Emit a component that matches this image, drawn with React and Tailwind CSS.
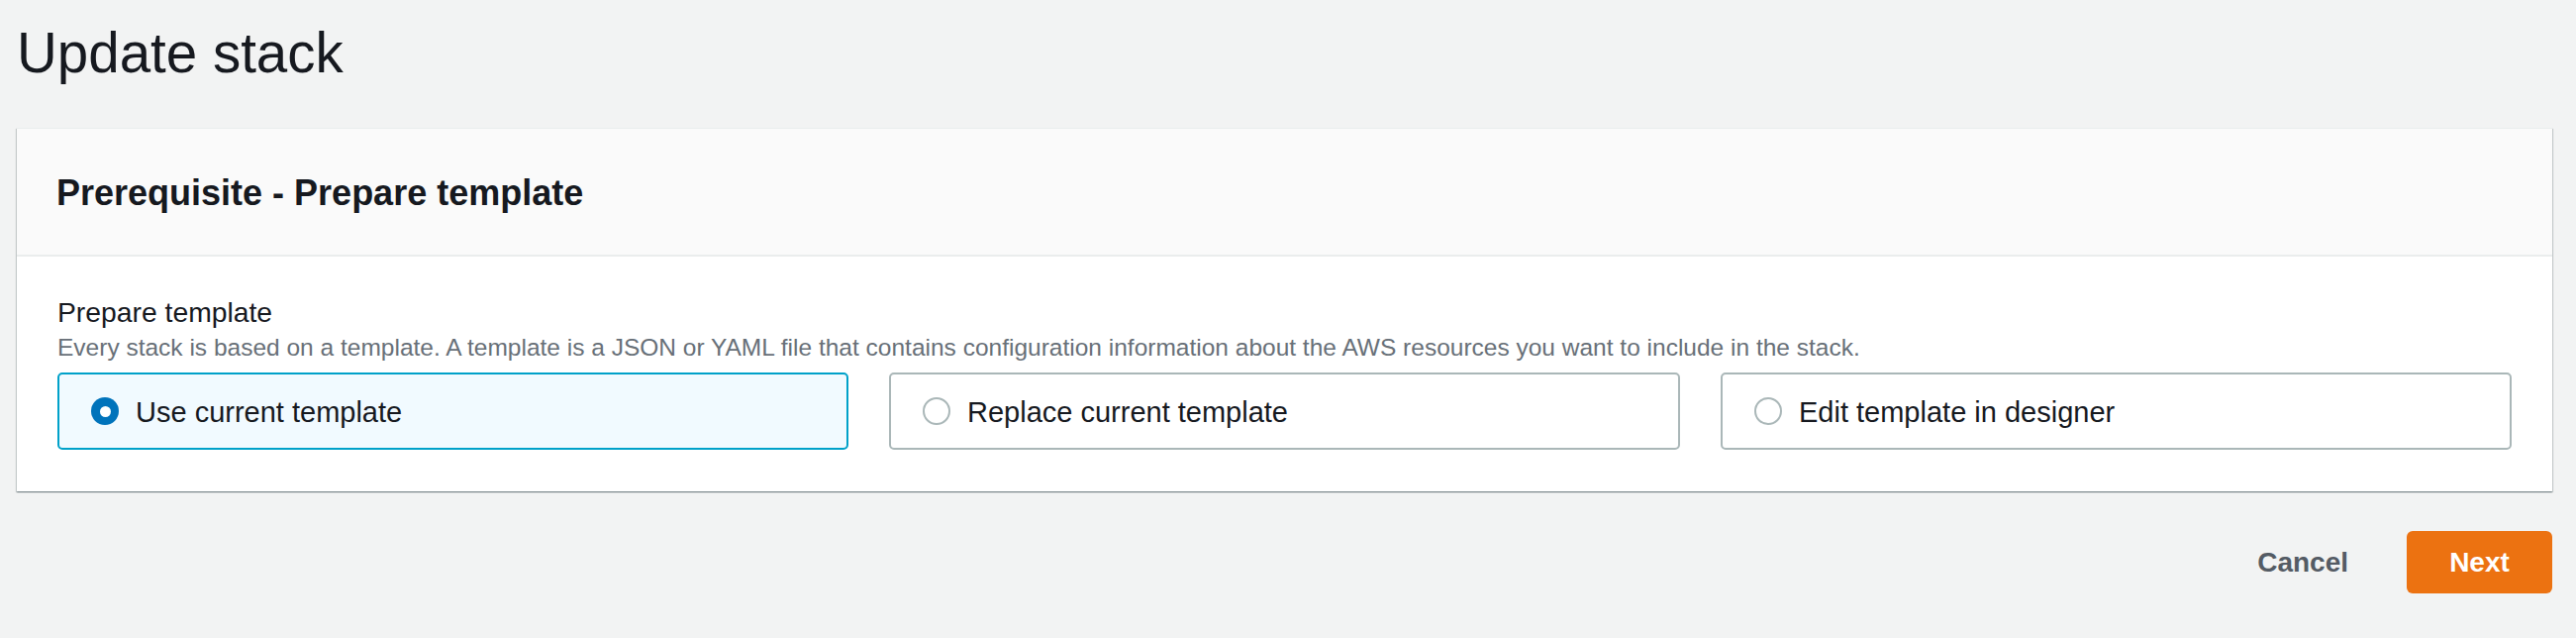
import React, { useState } from 'react';

const options = [
  { id: 'current', label: 'Use current template' },
  { id: 'replace', label: 'Replace current template' },
  { id: 'designer', label: 'Edit template in designer' },
];

// Radio tile used for the template choice
const RadioTile = ({ label, checked, onSelect }) => (
  <button
    type="button"
    onClick={onSelect}
    className={
      checked
        ? 'flex h-[78px] items-center rounded-[5px] border-2 border-[#00a1c9] bg-[#f1faff] pl-[32px] text-left'
        : 'flex h-[78px] items-center rounded-[5px] border-2 border-[#aab7b8] bg-white pl-[32px] text-left'
    }
  >
    {checked ? (
      <span className="flex h-[28px] w-[28px] items-center justify-center rounded-full bg-[#0073bb]">
        <span className="h-[11px] w-[11px] rounded-full bg-white" />
      </span>
    ) : (
      <span className="h-[28px] w-[28px] rounded-full border-2 border-[#aab7b8] bg-white" />
    )}
    <span className="ml-[17px] pt-[2px] text-[29px] leading-[36px] text-[#16191f]">{label}</span>
  </button>
);

const App = () => {
  const [selected, setSelected] = useState('current');

  return (
    <div
      className="min-h-[644px] bg-[#f2f3f3] pl-[17px] pr-[24px] pt-[22px]"
      style={{ fontFamily: '"Liberation Sans", Arial, sans-serif' }}
    >
      <h1 className="text-[56.5px] leading-[64px] font-normal text-[#16191f]">Update stack</h1>

      {/* Card */}
      <div className="mt-[43px] border-t border-[#eaeded] bg-white shadow-[0_1px_1px_0_rgba(0,28,36,0.3),1px_1px_1px_0_rgba(0,28,36,0.15),-1px_1px_1px_0_rgba(0,28,36,0.15)]">
        <div className="flex h-[129px] items-center border-b-2 border-[#eaeded] bg-[#fafafa] px-[40px]">
          <h2 className="pt-[2px] text-[36px] leading-[44px] font-bold text-[#16191f]">Prerequisite - Prepare template</h2>
        </div>

        <div className="px-[41px] pt-[38px] pb-[42px]">
          <div className="text-[28.3px] leading-[36px] text-[#16191f]">Prepare template</div>
          <div className="mt-[2px] text-[24.5px] leading-[32px] text-[#687078]">
            Every stack is based on a template. A template is a JSON or YAML file that contains configuration information about the AWS resources you want to include in the stack.
          </div>
          <div className="mt-[9px] grid grid-cols-3 gap-[41px]">
            {options.map((o) => (
              <RadioTile
                key={o.id}
                label={o.label}
                checked={selected === o.id}
                onSelect={() => setSelected(o.id)}
              />
            ))}
          </div>
        </div>
      </div>

      {/* Actions */}
      <div className="mt-[40px] flex items-center justify-end">
        <button type="button" className="text-[28px] leading-[36px] font-bold text-[#545b64]">
          Cancel
        </button>
        <button
          type="button"
          className="ml-[59px] h-[63px] w-[147px] rounded-[6px] bg-[#ec7211] text-[28px] leading-[36px] font-bold text-white"
        >
          Next
        </button>
      </div>
    </div>
  );
};

export default App;
